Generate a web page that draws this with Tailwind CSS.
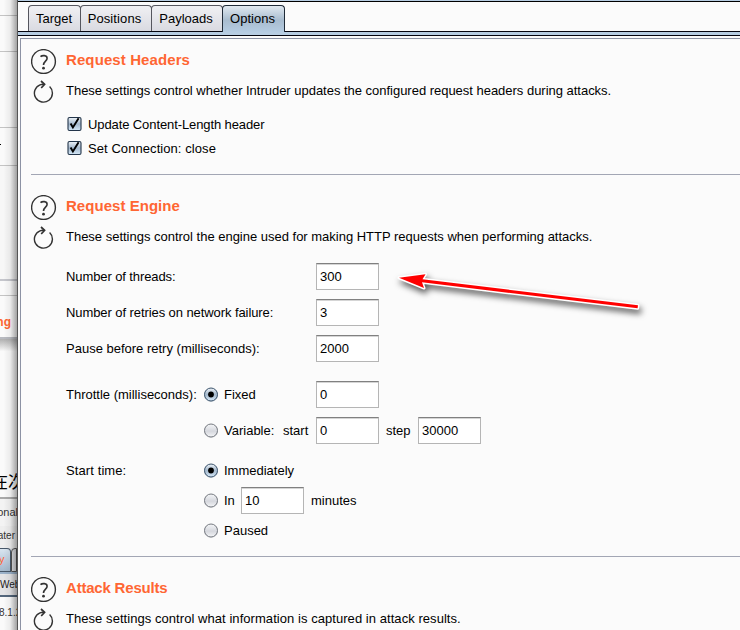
<!DOCTYPE html>
<html lang="en">
<head>
<meta charset="utf-8">
<title>Intruder options</title>
<script src="https://cdn.jsdelivr.net/npm/@tailwindcss/browser@4"></script>
</head>
<body class="w-[740px] h-[630px] overflow-hidden bg-[#fbfbfb] text-black text-[13px] leading-[16px] whitespace-nowrap" style="font-family:'Liberation Sans','Noto Sans CJK SC',sans-serif">
<svg class="absolute w-0 h-0">
  <defs>
    <linearGradient id="g" x2="0" y2="1"><stop offset="0" stop-color="#f5f6f8"/><stop offset=".55" stop-color="#d5d7dd"/><stop offset="1" stop-color="#f4f5f7"/></linearGradient>
    <linearGradient id="b" x2="0" y2="1"><stop offset="0" stop-color="#eef3f8"/><stop offset=".5" stop-color="#a4b8cc"/><stop offset="1" stop-color="#d5e8f8"/></linearGradient>
    <symbol id="help" viewBox="0 0 26 26"><circle cx="12.5" cy="12.5" r="11.9" fill="none" stroke="#333" stroke-width="1.4"/><path d="M9.5 7.7C11.2 6.1 16 6 16.1 9.3C16.2 12.1 12.5 12.2 12.5 16" fill="none" stroke="#333" stroke-width="1.6"/><circle cx="12.5" cy="19.2" r="1.4" fill="#333"/></symbol>
    <symbol id="reset" viewBox="0 0 22 24"><path d="M16.6 7.6A9 9 0 1 1 7 5.8Q9 5 11.2 5.3" fill="none" stroke="#333" stroke-width="1.4"/><path d="M8 2L11.6 5.3L8.2 9" fill="none" stroke="#333" stroke-width="1.7"/></symbol>
    <symbol id="check" viewBox="0 0 15 16"><rect x="1" y="1.5" width="13" height="13" rx="1.5" fill="url(#b)" stroke="#23354a" stroke-width="1.1"/><path d="M3.6 7.5L5.9 11.5L11.6 2.2" fill="none" stroke="#000" stroke-width="1.9"/></symbol>
    <symbol id="on" viewBox="0 0 16 16"><circle cx="7" cy="7.9" r="7" fill="#c9d0d8"/><circle cx="7" cy="7.5" r="6.5" fill="url(#b)" stroke="#3d556d"/><circle cx="7" cy="7.5" r="2.9" fill="#000"/></symbol>
    <symbol id="off" viewBox="0 0 16 16"><circle cx="7" cy="7.9" r="7" fill="#d8d9dc"/><circle cx="7" cy="7.5" r="6.5" fill="url(#g)" stroke="#777b82"/></symbol>
  </defs>
</svg>
<div class="flex h-[630px] relative">
  <aside class="w-[17px] h-full shrink-0 overflow-hidden relative bg-[#fafafa]">
    <div class="h-[16px] border-b border-[#c4c4c4]"></div>
    <div class="h-[36px] border-b border-[#c4c4c4]"></div>
    <div class="h-[76px] border-b border-[#c4c4c4]"></div>
    <div class="h-[38px] border-b border-[#c4c4c4] pt-[16px]"><div class="w-[1px] h-[1px] bg-black"></div></div>
    <div class="h-[115px] border-b-2 border-[#c5c6cc] bg-[#f7f7f7]"></div>
    <div class="h-[15px] border-b border-[#c4c4c4]"></div>
    <div class="h-[43px] border-b-2 border-[#b8bac0] pt-[18px] text-[12px] font-bold text-[#ff6633] flex justify-end pr-[6px]"><span>ng</span></div>
    <div class="h-[12px] bg-linear-to-b from-[#b0b0b0] to-[#f8f8f8]"></div>
    <div class="h-[146px] pt-[121px] text-[17px] leading-[22px]"><span class="-ml-[9px]">在次</span></div>
    <div class="h-[29px] pt-[6px] border-t-2 border-[#aaa] bg-[#f3f3f3] text-[11px] leading-[14px] text-[#333] flex justify-end"><span class="mr-[-1px]">onal</span></div>
    <div class="h-[22px] text-[10px] leading-[20px] bg-[#eee] text-[#333] flex justify-end pr-[2px]"><span>ater</span></div>
    <div class="h-[24px] bg-[#e5e6ea] flex"><div class="w-[11px] shrink-0 border border-l-0 border-[#48586a] rounded-tr-[4px] bg-linear-to-b from-[#d9e5f0] to-[#a4b9cd] text-[#ff6633] text-[11px] leading-[20px]"><span class="-ml-px">y</span></div><div class="w-[8px] border border-[#555] rounded-tl-[4px]"></div></div>
    <div class="h-[23px] bg-[#e4e4e6] border-t-2 border-[#9bb2ca] text-[10px] leading-[22px] text-[#222]">Web</div>
    <div class="h-[40px] border-t-2 border-[#54677c] text-[10px] leading-[31px] text-[#333]"><span class="-ml-px">8.1.2</span></div>
    <div class="absolute inset-0 bg-linear-to-r from-transparent from-20% via-black/6 via-60% to-black/35"></div>
  </aside>
  <main class="w-[723px] h-full border-l border-[#555] flex flex-col">
    <div class="h-[2px] bg-[#b7cde2] border-b border-black shrink-0"></div>
    <nav class="h-[30px] shrink-0 border-b border-[#05050f] pt-[3px] pl-[10px] flex leading-[25px] text-center">
      <div class="w-[53px] h-[26px] border border-b-0 border-[#55565e] rounded-t-[4px] bg-linear-to-b from-[#f0f0f3] to-[#d9dae1] pr-px">Target</div>
      <div class="w-[72px] -ml-px h-[26px] border border-b-0 border-[#55565e] rounded-t-[4px] bg-linear-to-b from-[#f0f0f3] to-[#d9dae1] tracking-[0.1px] pr-[3px]">Positions</div>
      <div class="w-[72px] -ml-px h-[26px] border border-b-0 border-[#55565e] rounded-t-[4px] bg-linear-to-b from-[#f0f0f3] to-[#d9dae1] pr-[2px]">Payloads</div>
      <div class="w-[63px] -ml-px h-[27px] border border-b-0 border-[#1f2b38] rounded-t-[4px] bg-linear-to-b from-[#e1e9f0] via-[#a8bccf] via-55% to-[#b5cce2] pr-[2px]">Options</div>
    </nav>
    <div class="h-[4px] shrink-0 bg-[#b7cde2] border-b border-[#05050f]"></div>
    <div class="mt-[2px] ml-[2px] h-[592px] border-t border-l border-[#8c92a4] pl-[10px] flex flex-col">
      <section class="h-[136px] shrink-0 border-b border-[#a2a6b4] pt-[9px]">
        <div class="h-[27px] flex items-center"><svg class="w-[26px] h-[26px]"><use href="#help"/></svg><h2 class="ml-[9px] pb-[3px] text-[15px] font-bold text-[#ff6633] tracking-[0.1px]"><span>Request Headers</span></h2></div>
        <div class="h-[32px] flex items-center"><svg class="ml-[2px] w-[22px] h-[24px]"><use href="#reset"/></svg><p class="ml-[11px] tracking-[-0.02px]"><span>These settings control whether Intruder updates the configured request headers during attacks.</span></p></div>
        <div class="mt-[5px] ml-[36px] h-[24px] flex items-center gap-[6px]"><svg class="w-[15px] h-[16px]"><use href="#check"/></svg><span class="pt-[2px] tracking-[-0.1px]">Update Content-Length header</span></div>
        <div class="ml-[36px] h-[24px] flex items-center gap-[6px]"><svg class="w-[15px] h-[16px]"><use href="#check"/></svg><span class="pt-[2px] tracking-[0.07px]">Set Connection: close</span></div>
      </section>
      <section class="h-[382px] shrink-0 border-b border-[#a2a6b4] pt-[19px]">
        <div class="h-[27px] flex items-center"><svg class="w-[26px] h-[26px]"><use href="#help"/></svg><h2 class="ml-[9px] pb-[3px] text-[15px] font-bold text-[#ff6633] tracking-[0.04px]"><span>Request Engine</span></h2></div>
        <div class="h-[32px] flex items-center"><svg class="ml-[2px] w-[22px] h-[24px]"><use href="#reset"/></svg><p class="ml-[11px] tracking-[-0.01px]"><span>These settings control the engine used for making HTTP requests when performing attacks.</span></p></div>
        <div class="mt-[10px] ml-[35px] flex flex-col gap-[9px]">
          <div class="flex items-center h-[27px]"><label class="w-[250px] tracking-[-0.1px]"><span>Number of threads:</span></label><div class="w-[63px] h-[27px] border border-[#b5b5b5] border-t-[#808080] bg-white shadow-[inset_0_1px_0_#d5d5d5] pl-[3px] leading-[25px]">300</div></div>
          <div class="flex items-center h-[27px]"><label class="w-[250px] tracking-[-0.08px]"><span>Number of retries on network failure:</span></label><div class="w-[63px] h-[27px] border border-[#b5b5b5] border-t-[#808080] bg-white shadow-[inset_0_1px_0_#d5d5d5] pl-[3px] leading-[25px]">3</div></div>
          <div class="flex items-center h-[27px]"><label class="w-[250px]"><span>Pause before retry (milliseconds):</span></label><div class="w-[63px] h-[27px] border border-[#b5b5b5] border-t-[#808080] bg-white shadow-[inset_0_1px_0_#d5d5d5] pl-[3px] leading-[25px]">2000</div></div>
          <div class="mt-[10px] flex items-center h-[27px]"><label class="w-[138px]"><span>Throttle (milliseconds):</span></label><svg class="w-[16px] h-[16px]"><use href="#on"/></svg><span class="ml-[4px] w-[92px]">Fixed</span><div class="w-[63px] h-[27px] border border-[#b5b5b5] border-t-[#808080] bg-white shadow-[inset_0_1px_0_#d5d5d5] pl-[3px] leading-[25px]">0</div></div>
          <div class="flex items-center h-[27px] pl-[138px]"><svg class="w-[16px] h-[16px]"><use href="#off"/></svg><span class="ml-[4px] w-[59px]">Variable:</span><span class="w-[33px]">start</span><div class="w-[63px] h-[27px] border border-[#b5b5b5] border-t-[#808080] bg-white shadow-[inset_0_1px_0_#d5d5d5] pl-[3px] leading-[25px]">0</div><span class="ml-[7px] w-[32px]">step</span><div class="w-[63px] h-[27px] border border-[#b5b5b5] border-t-[#808080] bg-white shadow-[inset_0_1px_0_#d5d5d5] pl-[3px] leading-[25px]">30000</div></div>
        </div>
        <div class="mt-[11px] ml-[35px] flex flex-col">
          <div class="flex items-center h-[30px]"><label class="w-[138px] pt-[2px] tracking-[0.1px]"><span>Start time:</span></label><svg class="mt-px w-[16px] h-[16px]"><use href="#on"/></svg><span class="ml-[4px] pt-[2px]">Immediately</span></div>
          <div class="flex items-center h-[30px] pl-[138px]"><svg class="mt-px w-[16px] h-[16px]"><use href="#off"/></svg><span class="ml-[4px] w-[17px] pt-[2px]">In</span><div class="w-[63px] h-[27px] border border-[#b5b5b5] border-t-[#808080] bg-white shadow-[inset_0_1px_0_#d5d5d5] pl-[3px] leading-[25px]">10</div><span class="ml-[7px] pt-[2px]">minutes</span></div>
          <div class="flex items-center h-[30px] pl-[138px]"><svg class="mt-px w-[16px] h-[16px]"><use href="#off"/></svg><span class="ml-[4px] pt-[2px]">Paused</span></div>
        </div>
      </section>
      <section class="h-[73px] shrink-0 overflow-hidden pt-[19px]">
        <div class="h-[27px] flex items-center"><svg class="w-[26px] h-[26px]"><use href="#help"/></svg><h2 class="ml-[9px] pb-[3px] text-[15px] font-bold text-[#ff6633] tracking-[-0.2px]"><span>Attack Results</span></h2></div>
        <div class="h-[32px] flex items-center"><svg class="ml-[2px] w-[22px] h-[24px]"><use href="#reset"/></svg><p class="ml-[11px] tracking-[0.055px]"><span>These settings control what information is captured in attack results.</span></p></div>
      </section>
    </div>
  </main>
  <svg class="absolute left-[390px] top-[260px] w-[270px] h-[65px] drop-shadow-[2px_4px_3px_rgba(0,0,0,0.65)]" viewBox="390 260 270 65"><path d="M399 277.8L425.5 274.2L422.5 279.3L638 305.3L637.6 308.3L422 282.3L424 288Z" fill="#f00" stroke="#fff" stroke-width="3" stroke-linejoin="round" paint-order="stroke"/></svg>
</div>
</body>
</html>
